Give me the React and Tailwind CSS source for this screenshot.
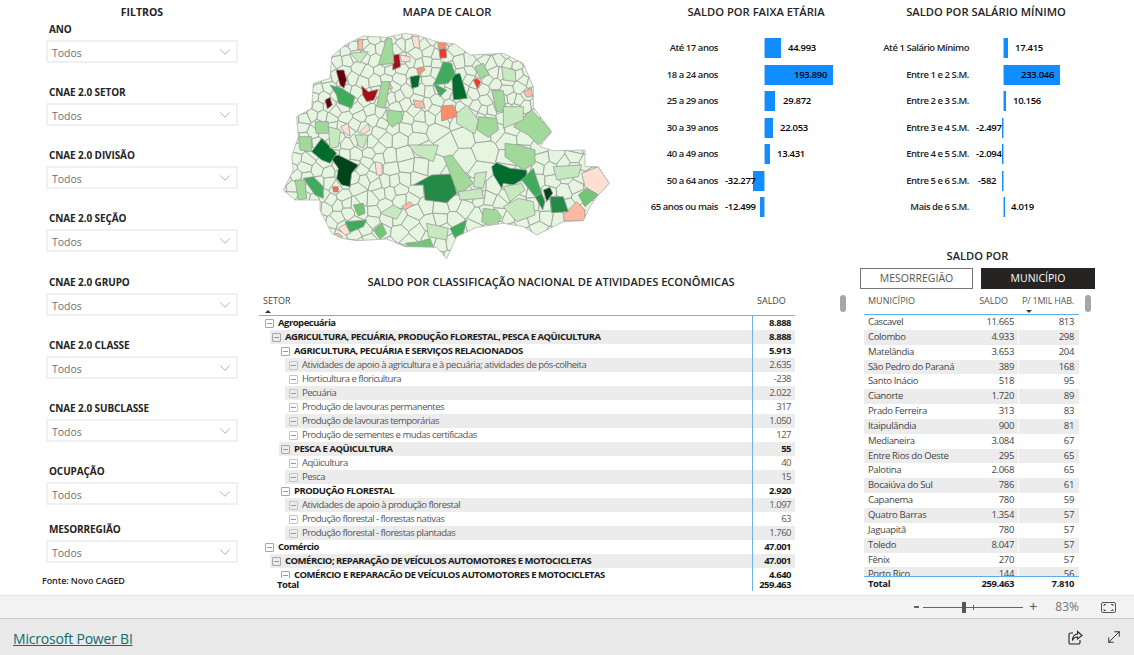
import { ChevronDown, MoveDiagonal } from "lucide-react";

const font = "font-['Open_Sans','Noto_Sans',sans-serif]";

const filtros = [
  { label: "ANO", gap: "-mt-[2px]" },
  { label: "CNAE 2.0 SETOR", gap: "mt-[22px]" },
  { label: "CNAE 2.0 DIVISÃO", gap: "mt-[22px]" },
  { label: "CNAE 2.0 SEÇÃO", gap: "mt-[22px]" },
  { label: "CNAE 2.0 GRUPO", gap: "mt-[23px]" },
  { label: "CNAE 2.0 CLASSE", gap: "mt-[22px]" },
  { label: "CNAE 2.0 SUBCLASSE", gap: "mt-[22px]" },
  { label: "OCUPAÇÃO", gap: "mt-[22px]" },
  { label: "MESORREGIÃO", gap: "mt-[17px]" },
];

const faixa = [
  { label: "Até 17 anos", value: 44993, text: "44.993", at: 23 },
  { label: "18 a 24 anos", value: 193890, text: "193.890", at: 29 },
  { label: "25 a 29 anos", value: 29872, text: "29.872", at: 18 },
  { label: "30 a 39 anos", value: 22053, text: "22.053", at: 15 },
  { label: "40 a 49 anos", value: 13431, text: "13.431", at: 12 },
  { label: "50 a 64 anos", value: -32277, text: "-32.277", at: -40 },
  { label: "65 anos ou mais", value: -12499, text: "-12.499", at: -40 },
];

const salario = [
  { label: "Até 1 Salário Mínimo", value: 17415, text: "17.415", at: 11 },
  { label: "Entre 1 e 2 S.M.", value: 233046, text: "233.046", at: 17 },
  { label: "Entre 2 e 3 S.M.", value: 10156, text: "10.156", at: 9 },
  { label: "Entre 3 e 4 S.M.", value: -2497, text: "-2.497", at: -28 },
  { label: "Entre 4 e 5 S.M.", value: -2094, text: "-2.094", at: -28 },
  { label: "Entre 5 e 6 S.M.", value: -582, text: "-582", at: -26 },
  { label: "Mais de 6 S.M.", value: 4019, text: "4.019", at: 7 },
];

const setores = [
  { l: 0, name: "Agropecuária", v: "8.888" },
  { l: 1, name: "AGRICULTURA, PECUÁRIA, PRODUÇÃO FLORESTAL, PESCA E AQÜICULTURA", v: "8.888", s: true },
  { l: 2, name: "AGRICULTURA, PECUÁRIA E SERVIÇOS RELACIONADOS", v: "5.913" },
  { l: 3, name: "Atividades de apoio à agricultura e à pecuária; atividades de pós-colheita", v: "2.635", s: true },
  { l: 3, name: "Horticultura e floricultura", v: "-238" },
  { l: 3, name: "Pecuária", v: "2.022", s: true },
  { l: 3, name: "Produção de lavouras permanentes", v: "317" },
  { l: 3, name: "Produção de lavouras temporárias", v: "1.050", s: true },
  { l: 3, name: "Produção de sementes e mudas certificadas", v: "127" },
  { l: 2, name: "PESCA E AQÜICULTURA", v: "55", s: true },
  { l: 3, name: "Aqüicultura", v: "40" },
  { l: 3, name: "Pesca", v: "15", s: true },
  { l: 2, name: "PRODUÇÃO FLORESTAL", v: "2.920" },
  { l: 3, name: "Atividades de apoio à produção florestal", v: "1.097", s: true },
  { l: 3, name: "Produção florestal - florestas nativas", v: "63" },
  { l: 3, name: "Produção florestal - florestas plantadas", v: "1.760", s: true },
  { l: 0, name: "Comércio", v: "47.001" },
  { l: 1, name: "COMÉRCIO; REPARAÇÃO DE VEÍCULOS AUTOMOTORES E MOTOCICLETAS", v: "47.001", s: true },
  { l: 2, name: "COMÉRCIO E REPARAÇÃO DE VEÍCULOS AUTOMOTORES E MOTOCICLETAS", v: "4.640" },
];

const nivelPad = ["pl-[3px]", "pl-[2px]", "pl-[2px]", "pl-[4px]"];
const nivelMargin = ["ml-[3px]", "ml-[11px]", "ml-[20px]", "ml-[26px]"];

const municipios = [
  ["Cascavel", "11.665", "813"],
  ["Colombo", "4.933", "298"],
  ["Matelândia", "3.653", "204"],
  ["São Pedro do Paraná", "389", "168"],
  ["Santo Inácio", "518", "95"],
  ["Cianorte", "1.720", "89"],
  ["Prado Ferreira", "313", "83"],
  ["Itaipulândia", "900", "81"],
  ["Medianeira", "3.084", "67"],
  ["Entre Rios do Oeste", "295", "65"],
  ["Palotina", "2.068", "65"],
  ["Bocaiúva do Sul", "786", "61"],
  ["Capanema", "780", "59"],
  ["Quatro Barras", "1.354", "57"],
  ["Jaguapitã", "780", "57"],
  ["Toledo", "8.047", "57"],
  ["Fênix", "270", "57"],
  ["Porto Rico", "144", "56"],
];

// map is authored in a 1020x720 space (3x the drawn size)
const contorno =
  "40,510 70,450 65,410 85,350 80,290 125,265 130,190 180,175 185,110 225,75 280,48 350,52 405,40 440,45 500,65 555,72 600,105 700,100 760,130 790,200 790,262 845,335 810,380 850,392 945,390 945,440 985,440 1018,490 985,525 960,560 940,602 880,605 800,645 760,620 700,610 620,622 560,650 530,716 500,682 405,680 350,657 260,662 215,655 185,640 150,570 150,540 75,540";

const areas = [
  ["#67000d", "198,150 222,150 230,180 222,205 210,195"],
  ["#67000d", "165,240 180,232 187,255 172,267"],
  ["#a50f15", "370,105 388,103 392,140 368,150"],
  ["#a50f15", "275,197 295,215 325,208 312,240 290,245 278,225"],
  ["#ef3b2c", "610,180 620,175 633,185 622,207"],
  ["#ef3b2c", "507,88 528,85 530,113 510,115"],
  ["#fc8d6a", "503,63 527,62 528,85 505,85"],
  ["#fc8d6a", "513,258 550,255 565,288 515,303"],
  ["#fb6a4a", "188,500 205,500 205,516 190,516"],
  ["#fc9272", "440,145 460,140 465,150 445,165"],
  ["#fcbba1", "905,560 920,545 945,570 943,602 882,603 880,585"],
  ["#fcbba1", "430,240 460,245 465,265 435,262"],
  ["#fcbba1", "395,560 420,545 430,555 405,570"],
  ["#fcbba1", "185,645 205,640 218,650 200,657"],
  ["#fcbba1", "330,200 360,190 368,205 335,212"],
  ["#fcbba1", "265,60 278,58 278,90 263,88"],
  ["#fcbba1", "760,215 785,205 787,228 770,232"],
  ["#fee0d2", "935,460 985,440 1018,490 985,525 945,500"],
  ["#fee0d2", "315,425 335,430 337,465 320,465"],
  ["#fee0d2", "205,625 225,612 242,640 225,645"],
  ["#fee0d2", "212,320 235,310 240,348 225,340"],
  ["#fee0d2", "270,335 295,310 300,330 280,342"],
  ["#fee0d2", "425,50 445,48 450,85 432,82"],
  ["#fee0d2", "390,105 420,110 420,125 395,125"],
  ["#00441b", "180,410 205,405 265,435 245,460 240,500 215,495 200,475 205,445"],
  ["#00441b", "820,510 840,502 848,520 830,545"],
  ["#006d2c", "125,395 155,355 200,400 180,430 155,420"],
  ["#006d2c", "545,165 570,160 592,235 550,240"],
  ["#006d2c", "665,440 680,428 720,445 770,450 770,470 730,495 700,490 695,505 670,465"],
  ["#006d2c", "420,170 450,165 445,200 425,205"],
  ["#238b45", "430,495 485,465 545,462 560,520 530,548 465,540 460,495"],
  ["#238b45", "840,530 880,530 895,575 845,578"],
  ["#238b45", "795,530 815,520 825,545 818,570"],
  ["#41ab5d", "180,195 215,205 255,230 245,265 205,250 200,225"],
  ["#41ab5d", "225,605 290,600 280,620 240,637"],
  ["#41ab5d", "755,480 790,445 815,520 795,530"],
  ["#41ab5d", "100,475 130,470 160,500 160,535 135,525"],
  ["#41ab5d", "520,125 545,130 555,165 535,190 490,195 510,150"],
  ["#41ab5d", "490,190 530,210 510,230"],
  ["#41ab5d", "540,625 590,600 580,640 555,655"],
  ["#74c476", "405,670 450,665 480,655 500,705 430,695"],
  ["#74c476", "310,630 335,610 350,640 330,658"],
  ["#74c476", "925,525 950,505 985,525 945,560"],
  ["#74c476", "250,555 280,550 285,580 265,588"],
  ["#a1d99b", "350,270 395,275 397,300 367,322 352,305"],
  ["#a1d99b", "135,305 175,305 175,340 138,340"],
  ["#a1d99b", "625,290 680,295 685,330 655,352 622,330"],
  ["#a1d99b", "640,565 680,570 695,590 675,625 635,605"],
  ["#a1d99b", "350,55 365,55 372,130 325,135"],
  ["#a1d99b", "335,185 360,185 345,265 320,260"],
  ["#a1d99b", "75,480 105,480 110,535 85,540"],
  ["#a1d99b", "85,350 125,350 125,395 90,390"],
  ["#a1d99b", "615,140 640,130 658,165 630,175"],
  ["#a1d99b", "665,212 700,212 708,270 680,275"],
  ["#a1d99b", "730,320 785,270 845,335 805,375 775,345"],
  ["#a1d99b", "520,410 545,405 610,490 565,525 540,460"],
  ["#a1d99b", "705,370 745,375 795,390 795,430 760,450 705,410"],
  ["#c7e9c0", "560,280 590,255 625,300 615,342 560,310"],
  ["#c7e9c0", "415,375 505,375 490,425 440,405"],
  ["#c7e9c0", "700,560 745,535 790,545 795,585 740,605"],
  ["#c7e9c0", "470,610 535,625 530,660 475,650"],
  ["#c7e9c0", "330,580 370,555 397,570 380,598"],
  ["#c7e9c0", "565,515 635,505 640,535 570,540"],
  ["#c7e9c0", "700,260 760,260 760,300 700,325"],
  ["#c7e9c0", "240,100 295,95 270,130"],
  ["#c7e9c0", "695,140 735,150 738,185 700,180"],
  ["#c7e9c0", "850,440 935,435 925,470 860,480"],
  ["#c7e9c0", "175,320 212,330 205,380 180,385"],
  ["#c7e9c0", "255,345 295,345 280,385 265,378"],
  ["#c7e9c0", "700,500 755,490 765,510 720,545"],
  ["#c7e9c0", "615,460 650,455 640,505 610,500"],
];

// small seeded generator so the municipal mesh is the same on every load
let semente = 41;
const rnd = () => {
  semente = (semente * 16807) % 2147483647;
  return semente / 2147483647;
};

const raio = (x, y) => {
  if (y < 300) return 23;
  if (x < 350) return 25;
  if (x > 450 && x < 700 && y < 500) return 44;
  if (y > 540) return 32;
  return 30;
};

const sitios = [];
for (let i = 0; i < 12000; i++) {
  const x = 30 + rnd() * 990;
  const y = 40 + rnd() * 680;
  if (sitios.every(([a, b]) => Math.hypot(a - x, b - y) > raio(x, y))) sitios.push([x, y]);
}

const cortar = (poly, [ax, ay], [bx, by]) => {
  const mx = (ax + bx) / 2;
  const my = (ay + by) / 2;
  const nx = bx - ax;
  const ny = by - ay;
  const lado = ([x, y]) => (x - mx) * nx + (y - my) * ny;
  const out = [];
  poly.forEach((p, i) => {
    const q = poly[(i + 1) % poly.length];
    const dp = lado(p);
    const dq = lado(q);
    if (dp <= 0) out.push(p);
    if (dp < 0 !== dq < 0) {
      const t = dp / (dp - dq);
      out.push([p[0] + (q[0] - p[0]) * t, p[1] + (q[1] - p[1]) * t]);
    }
  });
  return out;
};

const celulas = sitios.map((s) => {
  let poly = [[0, 0], [1020, 0], [1020, 720], [0, 720]];
  sitios.forEach((o) => {
    if (o !== s && Math.hypot(o[0] - s[0], o[1] - s[1]) < 200) poly = cortar(poly, s, o);
  });
  return poly.map(([x, y]) => `${x.toFixed(1)},${y.toFixed(1)}`).join(" ");
});

const Mapa = () => (
  <svg viewBox="0 0 1020 720" className="w-[340px] h-[240px] block">
    <defs>
      <clipPath id="parana">
        <polygon points={contorno} />
      </clipPath>
    </defs>
    <g clipPath="url(#parana)" stroke="#9a9a9a" strokeWidth="2.4" strokeLinejoin="round">
      <polygon points={contorno} fill="#e5f5e0" stroke="none" />
      {celulas.map((c, i) => (
        <polygon key={i} points={c} fill="#e5f5e0" />
      ))}
      {areas.map(([cor, p], i) => (
        <polygon key={i} points={p} fill={cor} />
      ))}
    </g>
    <polygon points={contorno} fill="none" stroke="#b5b5b5" strokeWidth="2.4" strokeLinejoin="round" />
  </svg>
);

const Slicer = ({ label, gap }) => (
  <div className={gap}>
    <div className="pl-[3px] h-[14px] leading-[14px] text-[10px] font-bold tracking-[-0.1px] text-[#252423]">{label}</div>
    <div className="mt-[4px] h-[23px] flex items-center justify-between border-2 border-[#f0f0f0] pl-[4px] pr-[2px] text-[10.5px] text-[#6f6f6f]">
      <span className="pt-[4px]">Todos</span>
      <ChevronDown size={18} strokeWidth={0.9} className="text-[#8a8a8a]" />
    </div>
  </div>
);

const BarChart = ({ titulo, dados, escala, labelW, negW, colW }) => (
  <div className={colW}>
    <h2 className="h-[24px] leading-[24px] text-center text-[11.2px] font-semibold text-[#252423]">{titulo}</h2>
    <div className="pt-[11px]">
      {dados.map((d) => {
        const w = Math.max(Math.abs(d.value) * escala, 1);
        return (
          <div key={d.label} className="flex items-center h-[26.5px]">
            <div className={`${labelW} text-right text-[9.5px] tracking-[-0.45px] font-semibold text-[#252423] whitespace-nowrap`}>{d.label}</div>
            <div className={`${negW} h-[20px] flex justify-end`}>
              {d.value < 0 && <div className="h-full bg-[#118dff]" style={{ width: w }} />}
            </div>
            <div className="relative h-[20px] flex-1 border-l border-[#9ccbf7]">
              {d.value > 0 && <div className="h-full bg-[#118dff]" style={{ width: w }} />}
              <span
                className="absolute top-[3px] text-[9.5px] tracking-[-0.3px] leading-[14px] font-semibold text-black"
                style={{ left: d.at }}
              >
                {d.text}
              </span>
            </div>
          </div>
        );
      })}
    </div>
  </div>
);

const Expand = ({ leve }) => (
  <span
    className={`shrink-0 w-[9px] h-[9px] mr-[4px] border rounded-[1px] flex items-center justify-center ${
      leve ? "border-[#c4c4c4]" : "border-[#a6a6a6]"
    }`}
  >
    <span className="w-[5px] h-px bg-[#999]" />
  </span>
);

const SortCaret = ({ className }) => (
  <span className={`absolute w-0 h-0 border-x-[3px] border-x-transparent ${className}`} />
);

const TabelaSetores = () => (
  <div className="w-[606px] pl-[9px] relative">
    <h2 className="w-[584px] h-[24px] leading-[24px] text-center text-[11.1px] font-semibold text-[#252423]">
      SALDO POR CLASSIFICAÇÃO NACIONAL DE ATIVIDADES ECONÔMICAS
    </h2>
    <div className="w-[536px] relative h-[22px] flex border-b border-[#6cb4ee] text-[9px] text-[#444] leading-[14px]">
      <div className="flex-1 pl-[4px]">SETOR</div>
      <div className="w-[42px] pl-[4px]">SALDO</div>
      <SortCaret className="left-[6px] bottom-[2px] border-b-[3px] border-b-[#333]" />
    </div>
    <div className="w-[536px] h-[262px] overflow-hidden">
      {setores.map((r) => (
        <div key={r.name} className="flex h-[14px] leading-[14px] text-[9.5px] tracking-[-0.5px]">
          <div className={`flex-1 min-w-0 flex ${nivelMargin[r.l]}`}>
            <div
              className={`flex-1 flex items-center whitespace-nowrap ${nivelPad[r.l]} ${r.s ? "bg-[#ececec]" : ""} ${
                r.l === 3 ? "text-[#555]" : "font-bold text-[#1b1a19]"
              }`}
            >
              <Expand leve={r.l === 3} />
              {r.name}
            </div>
          </div>
          <div
            className={`w-[43px] border-l border-[#6cb4ee] text-right pr-[4px] ${r.s ? "bg-[#ececec]" : ""} ${
              r.l === 3 ? "text-[#555]" : "font-bold text-[#1b1a19]"
            }`}
          >
            {r.v}
          </div>
        </div>
      ))}
    </div>
    <div className="w-[536px] flex h-[13px] leading-[13px] text-[9.5px] tracking-[-0.5px] font-bold text-[#1b1a19]">
      <div className="flex-1 pl-[18px]">Total</div>
      <div className="w-[43px] border-l border-[#6cb4ee] text-right pr-[4px]">259.463</div>
    </div>
    <div className="absolute left-[590px] top-[25px] w-[6px] h-[17px] rounded-full bg-[#a6a6a6]" />
  </div>
);

const TabelaMunicipios = () => (
  <div className="w-[272px] pl-[4px] relative">
    <h2 className="w-[235px] h-[17px] -mt-[23px] leading-[17px] text-center text-[11.1px] font-semibold text-[#252423]">
      SALDO POR
    </h2>
    <div className="flex gap-[8px] mt-[4px]">
      <div className="w-[113px] h-[21px] border border-[#777] text-[10.5px] leading-[19px] text-center text-[#555]">MESORREGIÃO</div>
      <div className="w-[114px] h-[21px] bg-[#252423] text-[10.5px] leading-[21px] text-center text-white">MUNICÍPIO</div>
    </div>
    <div className="ml-[4px] w-[215px] relative h-[25px] mt-[1px] flex border-b border-[#5aaef0] text-[9px] text-[#555] pt-[4px] leading-[14px]">
      <div className="w-[112px] pl-[4px]">MUNICÍPIO</div>
      <div className="w-[32px] text-right">SALDO</div>
      <div className="flex-1 text-right pr-[5px] whitespace-nowrap tracking-[-0.2px]">P/ 1MIL HAB.</div>
      <SortCaret className="left-[162px] bottom-[1px] border-t-[3px] border-t-[#333]" />
    </div>
    <div className="ml-[4px] w-[215px] h-[262px] overflow-hidden border-b border-[#5aaef0]">
      {municipios.map(([nome, saldo, hab], i) => (
        <div
          key={nome}
          className={`flex h-[14.85px] leading-[14.85px] text-[9.5px] tracking-[-0.35px] text-[#444] ${i % 2 ? "bg-[#ececec]" : ""}`}
        >
          <div className="w-[112px] pl-[4px]">{nome}</div>
          <div className="w-[38px] text-right">{saldo}</div>
          <div className="flex-1 text-right pr-[5px] ml-[4px] border-l border-white">{hab}</div>
        </div>
      ))}
    </div>
    <div className="ml-[4px] w-[215px] flex h-[14px] leading-[14px] text-[9.5px] tracking-[-0.4px] font-bold text-[#1b1a19]">
      <div className="w-[112px] pl-[4px]">Total</div>
      <div className="w-[38px] text-right">259.463</div>
      <div className="flex-1 text-right pr-[5px]">7.810</div>
    </div>
    <div className="absolute left-[229px] top-[25px] w-[6px] h-[17px] rounded-full bg-[#a6a6a6]" />
  </div>
);

export default function App() {
  return (
    <div className={`w-[1134px] h-[655px] flex flex-col overflow-hidden bg-white ${font}`}>
      <main className="h-[595px] shrink-0 flex">
        <aside className="w-[250px] pl-[46px] pr-[12px]">
          <h2 className="h-[24px] leading-[24px] text-center text-[10.5px] font-bold text-[#252423]">FILTROS</h2>
          {filtros.map((f) => (
            <Slicer key={f.label} {...f} />
          ))}
          <p className="-ml-[4px] mt-[11px] text-[9px] tracking-[-0.1px] font-semibold text-[#252423]">Fonte: Novo CAGED</p>
        </aside>
        <div className="flex-1 min-w-0 flex flex-col">
          <div className="h-[270px] shrink-0 flex">
            <div className="w-[394px]">
              <h2 className="h-[24px] leading-[24px] text-center text-[11.2px] font-semibold text-[#252423]">MAPA DE CALOR</h2>
              <div className="pl-[20px] -mt-[4px]">
                <Mapa />
              </div>
            </div>
            <BarChart titulo="SALDO POR FAIXA ETÁRIA" dados={faixa} escala={0.00035} labelW="w-[74px]" negW="w-[46px]" colW="w-[224px]" />
            <BarChart titulo="SALDO POR SALÁRIO MÍNIMO" dados={salario} escala={0.00024} labelW="w-[101px]" negW="w-[34px]" colW="w-[236px]" />
          </div>
          <div className="flex-1 flex">
            <TabelaSetores />
            <TabelaMunicipios />
          </div>
        </div>
      </main>

      <div className="h-[24px] bg-[#f3f3f3] border-y border-t-[#e3e3e3] border-b-[#c8c8c8] flex items-center justify-end text-[#555]">
        <span className="w-[5px] h-[2px] bg-[#666] mr-[4px]" />
        <div className="relative w-[100px] h-px bg-[#666] mr-[6px]">
          <span className="absolute left-[39px] -top-[5px] w-[4px] h-[11px] bg-[#555]" />
          <span className="absolute left-[50px] -top-[2px] w-px h-[5px] bg-[#666]" />
        </div>
        <span className="text-[14px] leading-none mr-[18px]">+</span>
        <span className="text-[12px] text-[#767676] mr-[22px]">83%</span>
        <svg width="15" height="11" viewBox="0 0 15 11" fill="none" stroke="#555" className="mr-[18px]">
          <rect x="0.5" y="0.5" width="14" height="10" rx="1.5" />
          <path d="M3 4V2.5H5M10 2.5H12V4M3 7V8.5H5M10 8.5H12V7" />
        </svg>
      </div>

      <footer className="flex-1 bg-[#e9e9e9] flex items-center justify-between pl-[13px] pr-[11px]">
        <a className="mt-[3px] text-[14px] tracking-[-0.2px] text-[#0f6d6d] underline">Microsoft Power BI</a>
        <div className="flex items-center gap-[22px]">
          <svg width="15" height="15" viewBox="0 0 15 15" fill="none" stroke="#252423" strokeWidth="1.1">
            <path d="M5 3H2.5A1.5 1.5 0 0 0 1 4.5V12.5A1.5 1.5 0 0 0 2.5 14H10.5A1.5 1.5 0 0 0 12 12.5V10" />
            <path d="M9.5 1.5L14 5.5L9.5 9V7C7 7 5.5 8 4.5 10.5C4.5 6.5 6.5 4 9.5 4Z" />
          </svg>
          <MoveDiagonal size={18} strokeWidth={1.2} className="text-[#252423]" />
        </div>
      </footer>
    </div>
  );
}
